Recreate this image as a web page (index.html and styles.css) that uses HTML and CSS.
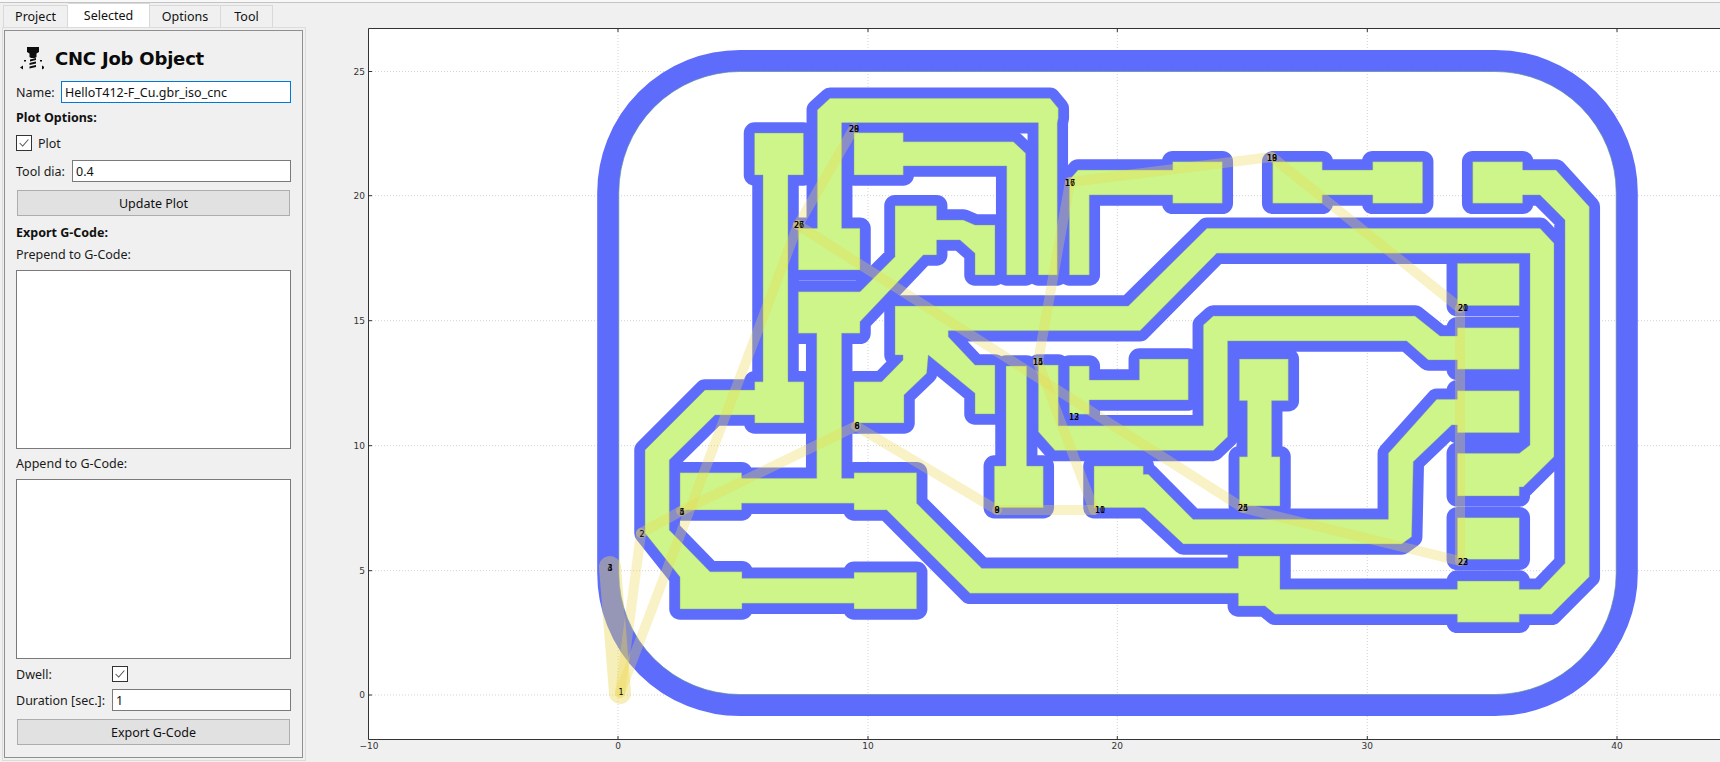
FILE: index.html
```html
<!DOCTYPE html>
<html lang="en">
<head>
<meta charset="utf-8">
<title>CNC Job Object</title>
<link rel="stylesheet" href="styles.css">
</head>
<body>
<div class="topbar"></div>
<div class="app">
  <aside class="sidebar">
    <nav class="tabs">
      <span class="tab tab-project">Project</span>
      <span class="tab tab-selected">Selected</span>
      <span class="tab tab-options">Options</span>
      <span class="tab tab-tool">Tool</span>
    </nav>
    <div class="pane-outer">
      <section class="pane">
        <header class="title-row">
          <svg class="cnc-icon" viewBox="0 0 26 26" width="26" height="26" aria-hidden="true">
            <path class="ink" d="M9 2h12v5l-2.500 1.500V12L17 13h-4l-1.500-1V8.500L9 7z"/>
            <path class="ink" d="M12 14.500l6-1.500v2l-6 1.500zM11.500 18l6.500-1.500v2L11.500 20zM11.500 21.500l6.500-1.500v2l-6.500 1.500z"/>
            <path class="ink" d="M2 22.500l3-2v4zM27 22.500l-3-2v4zM6 15h2v1.500H6zM22 15h2v1.500h-2z"/>
          </svg>
          <h1 class="title">CNC Job Object</h1>
        </header>
        <div class="field field-name">
          <label class="label label-name">Name:</label>
          <input class="input input-focus" type="text" value="HelloT412-F_Cu.gbr_iso_cnc">
        </div>
        <div class="heading heading-plot">Plot Options:</div>
        <div class="check-row check-plot">
          <span class="check"><svg viewBox="0 0 16 16" width="14" height="14"><path d="M3 8l3.500 3.500L13 4"/></svg></span>
          <span class="label">Plot</span>
        </div>
        <div class="field field-tool">
          <label class="label label-tool">Tool dia:</label>
          <input class="input" type="text" value="0.4">
        </div>
        <button class="btn btn-update" type="button">Update Plot</button>
        <div class="heading heading-export">Export G-Code:</div>
        <div class="label text-label prepend-label">Prepend to G-Code:</div>
        <textarea class="area area-prepend"></textarea>
        <div class="label text-label append-label">Append to G-Code:</div>
        <textarea class="area area-append"></textarea>
        <div class="field field-dwell">
          <label class="label label-wide">Dwell:</label>
          <span class="check"><svg viewBox="0 0 16 16" width="14" height="14"><path d="M3 8l3.500 3.500L13 4"/></svg></span>
        </div>
        <div class="field field-duration">
          <label class="label label-wide">Duration [sec.]:</label>
          <input class="input" type="text" value="1">
        </div>
        <button class="btn btn-export" type="button">Export G-Code</button>
      </section>
    </div>
  </aside>

  <main class="figure">
    <svg class="plot" viewBox="306 0 1414 762" width="1414" height="762" xmlns="http://www.w3.org/2000/svg">
      <defs>
        <g id="copper">
          <polygon points="754.500,133 803.500,133 803.500,175 788,175 788,381.700 804,381.700 804,423 754.700,423 754.700,415 715,415 669.300,460 669.300,530 710,571.700 742,571.700 742,578.300 854,578.300 854,572.300 916.700,572.300 916.700,609 854,609 854,603.300 742,603.300 742,609 680,609 680,577 645,533 645,450 705,390 754.700,390 754.700,381.700 763,381.700 763,175 754.500,175"/>
          <polygon points="680,472.700 741.700,472.700 741.700,478.300 816.700,478.300 816.700,333.300 798.300,333.300 798.300,291.700 860,291.700 895,256.700 895,205.700 936.700,205.700 936.700,220 963.300,220 975,225 995,225 995,275 975,275 975,253.300 960,240 936.700,240 936.700,255 923.300,255 860,321.700 860,333.300 841.700,333.300 841.700,478.300 854,478.300 854,472.700 916.700,472.700 916.700,503.300 981.700,568.300 1238.300,568.300 1238.300,556 1280,556 1280,589.300 1457.300,589.300 1457.300,581 1519.300,581 1519.300,589.300 1540,589.300 1565,563.300 1565,220 1540,195 1522.700,195 1522.700,203.300 1472.700,203.300 1472.700,161.700 1522.700,161.700 1522.700,170 1556,170 1589.300,206.700 1589.300,576.700 1551.700,614.300 1519.300,614.300 1519.300,622.300 1457.300,622.300 1457.300,614.300 1275,614.300 1265,606 1238.300,606 1238.300,593.300 970,593.300 886.700,510 854,510 854,503.300 741.700,503.300 741.700,510 680,510"/>
          <polygon points="798.300,228.300 817.300,228.300 817.300,110 830,98.300 1050,98.300 1058.300,108.300 1058.300,118 1057.300,123 1057.300,275 1038.300,275 1038.300,122.700 841.700,122.700 841.700,228.300 860,228.300 860,270 798.300,270"/>
          <polygon points="854,132.700 903.300,132.700 903.300,141.700 1013.300,141.700 1025.700,153.300 1025.700,275 1006.700,275 1006.700,166 903.300,166 903.300,175 854,175"/>
          <polygon points="1069.300,275 1069.300,180 1078,170 1172.700,170 1172.700,161.700 1222.300,161.700 1222.300,203.300 1172.700,203.300 1172.700,195 1089.300,195 1089.300,275"/>
          <polygon points="1272.700,161.700 1322.300,161.700 1322.300,170 1372.700,170 1372.700,161.700 1422.700,161.700 1422.700,203.300 1372.700,203.300 1372.700,195 1322.300,195 1322.300,203.300 1272.700,203.300"/>
          <polygon points="895,306 1128.300,306 1207,228.300 1540,228.300 1554,243.300 1554,456.700 1523.300,487 1519.300,487 1519.300,496 1457.300,496 1457.300,453.300 1519.300,453.300 1530,445 1530,253.300 1216.700,253.300 1140,330.700 948.300,330.700 948.300,336.700 975,365 995,365 995,414 975,414 975,393.300 928.300,355 926.700,373.300 904,395 904,423 854,423 854,381.700 881.700,381.700 903,360 903,355 895,355"/>
          <polygon points="1006,366 1026.700,366 1026.700,466 1043.300,466 1043.300,507.700 994.300,507.700 994.300,466 1006,466"/>
          <polygon points="1038.300,365 1058.300,365 1058.300,425.700 1203.300,425.700 1203.300,325 1213.300,316 1415,316 1440,336 1457.300,336 1457.300,327.700 1519.300,327.700 1519.300,369.300 1457.300,369.300 1457.300,360 1428.300,360 1406.700,341 1227.700,341 1227.700,436.700 1213.300,450.500 1055,450.500 1038.300,431.700"/>
          <polygon points="1069.300,366 1089.300,366 1089.300,380 1139.300,380 1139.300,359 1188.300,359 1188.300,400 1089.300,400 1089.300,414.300 1069.300,414.300"/>
          <polygon points="1239.300,359 1288.300,359 1288.300,400.700 1271.700,400.700 1271.700,456.700 1280,456.700 1280,506 1239.300,506 1239.300,456.700 1247.300,456.700 1247.300,400.700 1239.300,400.700"/>
          <polygon points="1094,466 1143.300,466 1143.300,474.300 1148.300,474.300 1193,519.300 1388.300,519.300 1388.300,453.300 1436.700,399.300 1457.300,399.300 1457.300,390.700 1519.300,390.700 1519.300,432.700 1457.300,432.700 1457.300,425 1451.700,425 1413.300,461.700 1411.700,536.700 1401.700,544 1183.300,544 1145,508.300 1143.300,507.700 1094,507.700"/>
          <rect x="1457.300" y="263.300" width="62" height="42.400"/>
          <rect x="1457.300" y="517.700" width="62" height="41.600"/>
        </g>
      </defs>

      <rect class="axes-bg" x="368.500" y="28.500" width="1360" height="711"/>

      <g class="grid">
        <path d="M618 29V739M868 29V739M1117.300 29V739M1367.300 29V739M1617 29V739"/>
        <path d="M369 71.500H1720M369 195.700H1720M369 320.700H1720M369 445.700H1720M369 570.700H1720M369 695H1720"/>
      </g>

      <rect class="ring" x="608" y="60.700" width="1019" height="644.600" rx="132" ry="132"/>
      <rect class="ring-edge" x="618.800" y="71.500" width="997.400" height="623" rx="121" ry="121"/>

      <use class="iso" href="#copper"/>
      <use class="cu" href="#copper"/>

      <g class="travel">
        <line class="travel-wide" x1="610" y1="567" x2="620" y2="693"/>
        <line x1="620" y1="693" x2="641" y2="533"/>
        <line x1="620" y1="693" x2="798" y2="225"/>
        <line x1="798" y1="225" x2="854" y2="128"/>
        <line x1="641" y1="533" x2="681" y2="511"/>
        <line x1="681" y1="511" x2="856" y2="426"/>
        <line x1="856" y1="426" x2="997" y2="510"/>
        <line x1="997" y1="510" x2="1094" y2="510"/>
        <line x1="1094" y1="510" x2="1038" y2="362"/>
        <line x1="1038" y1="362" x2="1070" y2="182"/>
        <line x1="1070" y1="182" x2="1272" y2="157"/>
        <line x1="1272" y1="157" x2="1460" y2="308"/>
        <line x1="1460" y1="308" x2="1460" y2="561"/>
        <line x1="1460" y1="561" x2="1243" y2="508"/>
        <line x1="1243" y1="508" x2="798" y2="225"/>
      </g>

      <g class="pt">
        <text x="621" y="695">1</text>
        <text x="642" y="537">2</text>
        <text x="610" y="571">3</text><text x="610" y="571">4</text>
        <text x="682" y="515">4</text><text x="682" y="515">5</text>
        <text x="857" y="429">6</text><text x="857" y="429">8</text>
        <text x="997" y="513">8</text><text x="997" y="513">9</text>
        <text x="1100" y="513">10</text><text x="1100" y="513">11</text>
        <text x="1038" y="365">14</text><text x="1038" y="365">15</text>
        <text x="1074" y="420">12</text><text x="1074" y="420">13</text>
        <text x="1070" y="186">16</text><text x="1070" y="186">17</text>
        <text x="1272" y="161">18</text><text x="1272" y="161">19</text>
        <text x="1463" y="311">20</text><text x="1463" y="311">21</text>
        <text x="1463" y="565">22</text><text x="1463" y="565">23</text>
        <text x="1243" y="511">24</text><text x="1243" y="511">25</text>
        <text x="799" y="228">26</text><text x="799" y="228">27</text>
        <text x="854" y="132">28</text><text x="854" y="132">29</text>
      </g>

      <g class="tick-marks">
        <path d="M618 739v-3M868 739v-3M1117.300 739v-3M1367.300 739v-3M1617 739v-3"/>
        <path d="M618 29v3M868 29v3M1117.300 29v3M1367.300 29v3M1617 29v3"/>
        <path d="M369 71.500h3M369 195.700h3M369 320.700h3M369 445.700h3M369 570.700h3M369 695h3"/>
      </g>

      <path class="axes-line" d="M1720 28.500H368.500V739.500H1720"/>

      <g class="ylab">
        <text x="365" y="74.500">25</text>
        <text x="365" y="199">20</text>
        <text x="365" y="324">15</text>
        <text x="365" y="449">10</text>
        <text x="365" y="574">5</text>
        <text x="365" y="698">0</text>
      </g>
      <g class="xlab">
        <text x="369" y="749">&#8722;10</text>
        <text x="618" y="749">0</text>
        <text x="868" y="749">10</text>
        <text x="1117.300" y="749">20</text>
        <text x="1367.300" y="749">30</text>
        <text x="1617" y="749">40</text>
      </g>
    </svg>
  </main>
</div>
</body>
</html>
```

FILE: styles.css
```css
* { box-sizing: border-box; }

html, body {
  margin: 0;
  height: 100%;
  overflow: hidden;
  background: #f0f0f0;
  color: #111;
  font-family: "Noto Sans", "Open Sans", sans-serif;
  font-size: 12.500px;
}

.topbar {
  height: 3px;
  background: #f8f8f8;
  border-bottom: 1px solid #c4c4c4;
}

.app {
  display: flex;
  height: 759px;
}

.sidebar {
  width: 306px;
  flex: none;
  display: flex;
  flex-direction: column;
  padding-left: 2px;
}

.tabs {
  display: flex;
  height: 24px;
  padding-left: 1px;
  align-items: flex-end;
}

.tab {
  height: 22px;
  display: flex;
  align-items: center;
  justify-content: center;
  background: #f0f0f0;
  border: 1px solid #d9d9d9;
  border-bottom: 0;
  border-left: 0;
}

.tab-project { width: 65px; border-left: 1px solid #d9d9d9; }
.tab-selected { width: 82px; height: 24px; background: #fff; padding-bottom: 1px; }
.tab-options { width: 71px; }
.tab-tool { width: 52px; }

.pane-outer {
  flex: 1;
  background: #f0f0f0;
  border: 1px solid #dcdcdc;
  padding: 2px 2px 2px 1px;
  margin-bottom: 1px;
}

.pane {
  height: 728px;
  border: 1px solid #8f8f8f;
  padding: 13px 11px 0 11px;
  display: flex;
  flex-direction: column;
}

.title-row {
  display: flex;
  align-items: center;
  height: 28px;
  padding-left: 2px;
}

.cnc-icon { flex: none; margin-right: 11px; }
.ink { fill: #0c0c0c; }

.title {
  margin: 0;
  font-family: "DejaVu Sans", sans-serif;
  font-size: 18px;
  font-weight: 700;
  color: #0a0a0a;
  letter-spacing: -0.2px;
}

.field {
  display: flex;
  align-items: center;
  height: 22px;
}

.field-name { margin-top: 9px; }
.field-tool { margin-top: 9px; }
.field-dwell { margin-top: 7px; height: 16px; }
.field-duration { margin-top: 7px; }

.label { flex: none; color: #1a1a1a; }
.label-name { width: 45px; }
.label-tool { width: 56px; }
.label-wide { width: 96px; }

.input {
  flex: 1;
  min-width: 0;
  height: 22px;
  padding: 0 3px;
  border: 1px solid #7a7a7a;
  background: #fff;
  color: #111;
  font: inherit;
  outline: 0;
}

.input-focus { border-color: #0078d7; }

.heading {
  height: 18px;
  line-height: 18px;
  font-weight: 700;
  color: #111;
}

.heading-plot { margin-top: 6px; }
.heading-export { margin-top: 8px; }

.check-row {
  display: flex;
  align-items: center;
  gap: 6px;
  height: 16px;
}

.check-plot { margin-top: 8px; }

.check {
  flex: none;
  width: 16px;
  height: 16px;
  display: flex;
  align-items: center;
  justify-content: center;
  background: #fff;
  border: 1px solid #333;
}

.check path { fill: none; stroke: #555; stroke-width: 1.200; }

.btn {
  width: 273px;
  height: 26px;
  margin-left: 1px;
  flex: none;
  background: #e1e1e1;
  border: 1px solid #adadad;
  color: #111;
  font: inherit;
  padding: 0;
}

.btn-update { margin-top: 8px; }
.btn-export { margin-top: 8px; }

.text-label { height: 18px; line-height: 18px; }
.prepend-label { margin-top: 4px; }
.append-label { margin-top: 6px; }

.area {
  display: block;
  width: 275px;
  flex: none;
  border: 1px solid #7a7a7a;
  background: #fff;
  resize: none;
  outline: 0;
  padding: 0;
}

.area-prepend { height: 179px; margin-top: 6px; }
.area-append { height: 180px; margin-top: 6px; }

.figure {
  flex: 1;
  margin-top: -3px;
  min-width: 0;
}

.plot { display: block; }

.axes-bg { fill: #fff; }

.grid path {
  fill: none;
  stroke: #d2d2d2;
  stroke-width: 1;
  stroke-dasharray: 1 2;
}

.ring {
  fill: none;
  stroke: #5e6cfb;
  stroke-width: 21.600;
}

.ring-edge {
  fill: none;
  stroke: #5f8f9f;
  stroke-width: 1;
  opacity: 0.7;
}

.iso {
  fill: #5e6cfb;
  stroke: #5e6cfb;
  stroke-width: 21.500;
  stroke-linejoin: round;
}

.cu {
  fill: #cdf58a;
  stroke: #7f9f7f;
  stroke-width: 0.700;
  stroke-opacity: 0.6;
}

.travel line {
  stroke: rgb(235, 215, 80);
  stroke-opacity: 0.32;
  stroke-width: 10;
  stroke-linecap: round;
}

.travel .travel-wide { stroke-width: 22; stroke-opacity: 0.4; }

.pt text {
  font-family: "DejaVu Sans", sans-serif;
  font-size: 8px;
  fill: #000;
  text-anchor: middle;
}

.tick-marks path { fill: none; stroke: #333; stroke-width: 1; }

.axes-line { fill: none; stroke: #333; stroke-width: 1; }

.ylab text, .xlab text {
  font-family: "DejaVu Sans", sans-serif;
  font-size: 9px;
  fill: #333;
}

.ylab text { text-anchor: end; }
.xlab text { text-anchor: middle; }
```
